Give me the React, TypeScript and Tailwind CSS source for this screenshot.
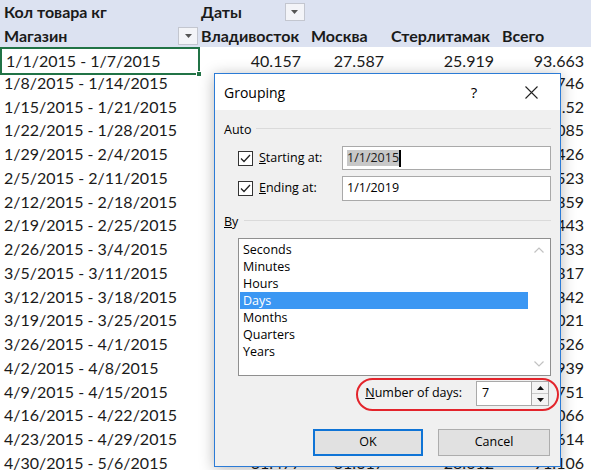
import React from 'react';

const rows = [
  ['1/1/2015 - 1/7/2015', '40.157', '27.587', '25.919', '93.663'],
  ['1/8/2015 - 1/14/2015', '35.214', '28.618', '24.914', '88.746'],
  ['1/15/2015 - 1/21/2015', '38.402', '29.011', '28.107', '95.52'],
  ['1/22/2015 - 1/28/2015', '36.775', '27.903', '26.407', '91.085'],
  ['1/29/2015 - 2/4/2015', '37.118', '28.412', '26.896', '92.426'],
  ['2/5/2015 - 2/11/2015', '36.204', '27.719', '26.600', '90.523'],
  ['2/12/2015 - 2/18/2015', '35.881', '27.466', '26.012', '89.359'],
  ['2/19/2015 - 2/25/2015', '38.019', '29.102', '27.322', '94.443'],
  ['2/26/2015 - 3/4/2015', '38.925', '29.640', '27.968', '96.533'],
  ['3/5/2015 - 3/11/2015', '37.330', '28.571', '26.916', '92.817'],
  ['3/12/2015 - 3/18/2015', '37.547', '28.705', '27.090', '93.342'],
  ['3/19/2015 - 3/25/2015', '36.660', '27.934', '26.427', '91.021'],
  ['3/26/2015 - 4/1/2015', '36.407', '27.850', '26.269', '90.526'],
  ['4/2/2015 - 4/8/2015', '38.611', '29.388', '27.940', '95.939'],
  ['4/9/2015 - 4/15/2015', '38.152', '29.016', '27.583', '94.751'],
  ['4/16/2015 - 4/22/2015', '37.480', '28.530', '27.056', '93.066'],
  ['4/23/2015 - 4/29/2015', '37.296', '28.322', '26.996', '92.614'],
  ['4/30/2015 - 5/6/2015', '31.477', '31.617', '28.012', '91.106'],
];

const units = ['Seconds', 'Minutes', 'Hours', 'Days', 'Months', 'Quarters', 'Years'];

const cols = 'grid grid-cols-[200px_106px_82px_110px_93px]';

const FilterButton = () => (
  <div className="w-[20px] h-[18px] border border-[#c3c6cf] bg-[#f3f4f8] flex items-center justify-center">
    <svg width="7" height="4" viewBox="0 0 7 4">
      <path d="M0 0 L7 0 L3.5 4 Z" fill="#555" />
    </svg>
  </div>
);

const Check = () => (
  <div className="w-[15px] h-[15px] border border-[#333] bg-white flex items-center justify-center">
    <svg width="11" height="9" viewBox="0 0 11 9">
      <path d="M1 4.5 L4 7.5 L10 1" fill="none" stroke="#222" strokeWidth="1.3" />
    </svg>
  </div>
);

const App = () => {
  return (
    <div className="relative w-[591px] h-[470px] overflow-hidden bg-white text-[#1a1a1a] font-['Lato',sans-serif] text-[16px]">
      {/* pivot header */}
      <div className={`${cols} h-[23.5px] bg-[#dce2f1] font-bold items-center`}>
        <div className="pl-[4px]">Кол товара кг</div>
        <div className="col-span-4 flex items-center gap-[43px] pl-[1px]">
          <span>Даты</span>
          <FilterButton />
        </div>
      </div>
      <div className={`${cols} h-[23.5px] bg-[#dce2f1] font-bold items-center`}>
        <div className="pl-[4px] pr-[2px] flex items-center justify-between">
          <span>Магазин</span>
          <FilterButton />
        </div>
        <div className="pl-[1px]">Владивосток</div>
        <div className="pl-[5px]">Москва</div>
        <div className="pl-[3px]">Стерлитамак</div>
        <div className="pl-[4px]">Всего</div>
      </div>

      {/* pivot rows */}
      <div className="flex flex-col">
        {rows.map((r, i) => (
          <div key={i} className={`${cols} h-[23.76px] items-center`}>
            <div
              className={`h-full flex items-center pl-[4px] ${
                i === 0 ? 'relative border-2 border-[#217346] pl-[2px]' : ''
              }`}
            >
              {r[0]}
              {i === 0 && (
                <span className="absolute right-[-4px] bottom-[-4px] w-[6px] h-[6px] bg-[#217346] border border-white" />
              )}
            </div>
            <div className="text-right pr-[5px]">{r[1]}</div>
            <div className="text-right pr-[4px]">{r[2]}</div>
            <div className="text-right pr-[4px]">{r[3]}</div>
            <div className="text-right pr-[7px]">{r[4]}</div>
          </div>
        ))}
      </div>

      {/* Grouping dialog */}
      <div className="absolute left-[214px] top-[73px] w-[347px] h-[394px] border border-[#2b7bd6] bg-[#f0f0f0] shadow-[0_2px_14px_rgba(0,0,0,0.28)] font-['Open_Sans',sans-serif] text-[12.5px] text-black">
        <div className="h-[36px] bg-white flex items-center pl-[9px]">
          <span className="flex-1 text-[14px]">Grouping</span>
          <span className="w-[20px] text-center text-[15px]">?</span>
          <div className="w-[46px] ml-[24px] mr-[6px] flex items-center justify-center">
            <svg width="13" height="13" viewBox="0 0 13 13">
              <path d="M0.5 0.5 L12.5 12.5 M12.5 0.5 L0.5 12.5" stroke="#222" strokeWidth="1.1" />
            </svg>
          </div>
        </div>

        <div className="px-[9px] pt-[11px]">
          <div className="flex items-center h-[18px]">
            <span>Auto</span>
            <div className="flex-1 h-px bg-[#dadada] ml-[4px] -mt-[3px]" />
          </div>

          <div className="flex items-center h-[24px] mt-[7px]">
            <div className="w-[118px] pl-[14px] flex items-center gap-[6px]">
              <Check />
              <span><span className="underline">S</span>tarting at:</span>
            </div>
            <div className="w-[209px] h-full border border-[#a9a9a9] bg-white flex items-center pl-[4px]">
              <span className="bg-[#c8c8c8] text-[#1a1a1a] leading-[16px]">1/1/2015</span>
              <span className="w-[2px] h-[17px] bg-black" />
            </div>
          </div>

          <div className="flex items-center h-[25px] mt-[6px]">
            <div className="w-[118px] pl-[14px] flex items-center gap-[6px]">
              <Check />
              <span><span className="underline">E</span>nding at:</span>
            </div>
            <div className="w-[209px] h-full border border-[#a9a9a9] bg-white flex items-center pl-[4px]">
              1/1/2019
            </div>
          </div>

          <div className="flex items-center h-[18px] mt-[12px]">
            <span><span className="underline">B</span>y</span>
            <div className="flex-1 h-px bg-[#dadada] ml-[6px] -mt-[4px]" />
          </div>

          <div className="ml-[14px] mt-[7px] w-[313px] h-[138px] border border-[#8f8f8f] bg-white flex">
            <div className="flex-1 flex flex-col pt-[2px] pl-[1px]">
              {units.map((u) => (
                <div
                  key={u}
                  className={`h-[17px] leading-[17px] pl-[3px] ${
                    u === 'Days' ? 'bg-[#3b97f3] text-white' : ''
                  }`}
                >
                  {u}
                </div>
              ))}
            </div>
            <div className="w-[22px] flex flex-col items-center justify-between py-[8px]">
              <svg width="10" height="6" viewBox="0 0 10 6">
                <path d="M0.5 5.5 L5 1 L9.5 5.5" fill="none" stroke="#c2c2c2" strokeWidth="1.2" />
              </svg>
              <svg width="10" height="6" viewBox="0 0 10 6">
                <path d="M0.5 0.5 L5 5 L9.5 0.5" fill="none" stroke="#c2c2c2" strokeWidth="1.2" />
              </svg>
            </div>
          </div>

          <div className="flex items-center justify-end h-[25px] mt-[5px] pr-[2px]">
            <span className="mr-[14px]"><span className="underline">N</span>umber of days:</span>
            <div className="w-[55px] h-full border border-[#a9a9a9] border-r-0 bg-white flex items-center pl-[5px]">
              7
            </div>
            <div className="w-[18px] h-full border border-[#a9a9a9] bg-white flex flex-col">
              <div className="flex-1 border-b border-[#c9c9c9] bg-[#f4f4f4] flex items-center justify-center">
                <svg width="7" height="4" viewBox="0 0 7 4">
                  <path d="M0 4 L7 4 L3.5 0 Z" fill="#111" />
                </svg>
              </div>
              <div className="flex-1 bg-[#f4f4f4] flex items-center justify-center">
                <svg width="7" height="4" viewBox="0 0 7 4">
                  <path d="M0 0 L7 0 L3.5 4 Z" fill="#111" />
                </svg>
              </div>
            </div>
          </div>

          <div className="flex justify-end gap-[15px] mt-[23px] pr-[1px]">
            <button className="w-[110px] h-[27px] border-2 border-[#0f74d6] bg-[#e1e1e1]">OK</button>
            <button className="w-[112px] h-[27px] border border-[#adadad] bg-[#e1e1e1]">Cancel</button>
          </div>
        </div>

        {/* red annotation ring */}
        <div className="absolute left-[141px] top-[304px] w-[203px] h-[33px] border-[2.5px] border-[#e3242b] rounded-[18px] pointer-events-none" />
      </div>
    </div>
  );
};

export default App;
